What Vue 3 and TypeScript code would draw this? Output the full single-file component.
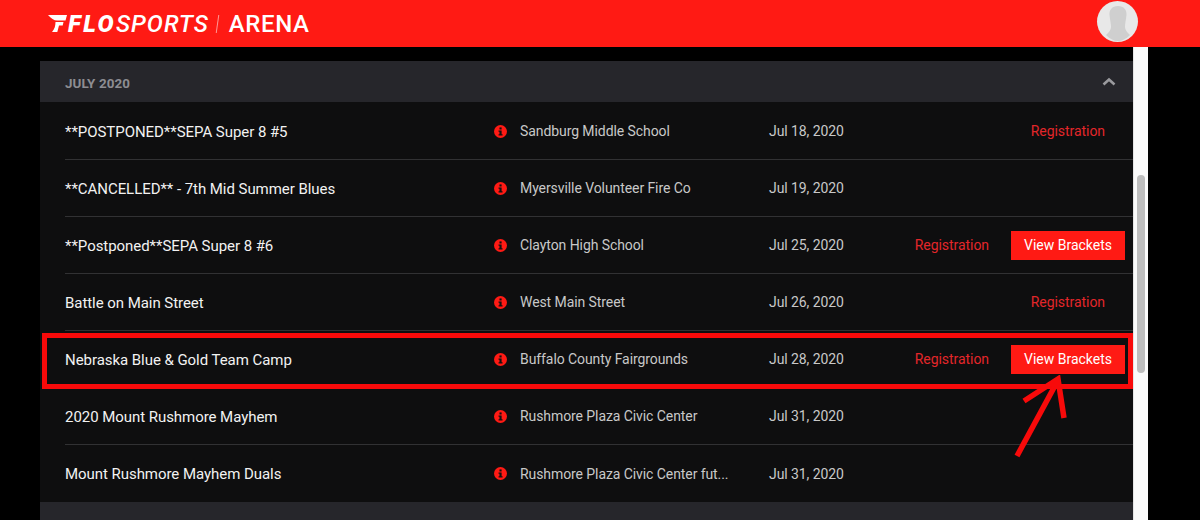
<template>
  <div class="page">
    <header class="topbar">
      <div class="brand">
        <svg class="brand-mark" viewBox="0 0 19 17" width="19" height="17" aria-hidden="true">
          <path d="M0 0 H19 L17.5 5.5 H9 C6 5.5 3 3.5 0 0 Z" fill="#fff" />
          <path d="M7.5 7 H15.5 L14.7 10.5 H11 L9.3 17 H4 C6.5 14 7.5 11 7.5 7 Z" fill="#fff" />
        </svg>
        <span class="brand-flo">FLO</span><span class="brand-sports">SPORTS</span>
        <span class="brand-slash"></span>
        <span class="brand-arena">ARENA</span>
      </div>
      <div class="avatar">
        <svg viewBox="0 0 40 40" width="40" height="40" aria-hidden="true">
          <path d="M20 4 C26 4 29 8 28.5 13 C28 18 27 21 27 25 C27 28 29 30 32 33 C28 37 24 39 20 39 C16 39 12 37 8 33 C11 30 13 28 13 25 C13 21 12 18 11.5 13 C11 8 14 4 20 4 Z" fill="#cfcfcf" />
        </svg>
      </div>
    </header>

    <div class="body">
      <main class="content">
        <section class="month">
          <span>JULY 2020</span>
          <svg class="chevron" viewBox="0 0 14 9" width="14" height="9" aria-hidden="true">
            <path d="M1.5 7.5 L7 2.5 L12.5 7.5" fill="none" stroke="#9a9a9e" stroke-width="2.6" />
          </svg>
        </section>

        <ul class="rows">
          <li v-for="event in events" :key="event.name" class="row">
            <div class="name">{{ event.name }}</div>
            <svg class="info" viewBox="0 0 14 14" width="13" height="13" aria-hidden="true">
              <circle cx="7" cy="7" r="7" fill="#ff1a14" />
              <rect x="5.9" y="2.6" width="2.3" height="2.2" fill="#111" />
              <path d="M4.9 5.9 H8.2 V9.9 H9.2 V11.4 H4.9 V9.9 H5.9 V7.4 H4.9 Z" fill="#111" />
            </svg>
            <div class="venue">{{ event.venue }}</div>
            <div class="date">{{ event.date }}</div>
            <div class="actions">
              <a v-if="event.registration" class="reg">Registration</a>
              <a v-if="event.brackets" class="brackets">View Brackets</a>
            </div>
          </li>
        </ul>

        <section class="month month--next"></section>

        <div class="highlight"></div>
        <svg class="arrow" viewBox="0 0 60 90" width="60" height="90" aria-hidden="true">
          <path d="M7 81 L47 7 M14 26 L48 4 L54 43" fill="none" stroke="#f80a0a" stroke-width="5.5" />
        </svg>
      </main>
      <div class="scrollbar"><div class="thumb"></div></div>
      <div class="gutter"></div>
    </div>
  </div>
</template>

<script setup lang="ts">
interface EventRow {
  name: string
  venue: string
  date: string
  registration: boolean
  brackets: boolean
}

const events: EventRow[] = [
  { name: '**POSTPONED**SEPA Super 8 #5', venue: 'Sandburg Middle School', date: 'Jul 18, 2020', registration: true, brackets: false },
  { name: '**CANCELLED** - 7th Mid Summer Blues', venue: 'Myersville Volunteer Fire Co', date: 'Jul 19, 2020', registration: false, brackets: false },
  { name: '**Postponed**SEPA Super 8 #6', venue: 'Clayton High School', date: 'Jul 25, 2020', registration: true, brackets: true },
  { name: 'Battle on Main Street', venue: 'West Main Street', date: 'Jul 26, 2020', registration: true, brackets: false },
  { name: 'Nebraska Blue & Gold Team Camp', venue: 'Buffalo County Fairgrounds', date: 'Jul 28, 2020', registration: true, brackets: true },
  { name: '2020 Mount Rushmore Mayhem', venue: 'Rushmore Plaza Civic Center', date: 'Jul 31, 2020', registration: false, brackets: false },
  { name: 'Mount Rushmore Mayhem Duals', venue: 'Rushmore Plaza Civic Center fut...', date: 'Jul 31, 2020', registration: false, brackets: false },
]
</script>

<style>
html,
body {
  margin: 0;
  background: #000;
  overflow: hidden;
}
</style>

<style scoped>
.page {
  width: 1200px;
  height: 520px;
  overflow: hidden;
  background: #000;
  font-family: 'Roboto', 'Liberation Sans', sans-serif;
  display: flex;
  flex-direction: column;
}

.topbar {
  height: 47px;
  flex: none;
  background: #ff1a14;
  display: flex;
  align-items: center;
  justify-content: space-between;
  padding: 0 62px 0 48px;
}

.brand {
  display: flex;
  align-items: center;
  color: #fff;
  font-size: 24px;
  line-height: 47px;
}

.brand-mark {
  margin-right: 1px;
}

.brand-flo {
  font-weight: 900;
  font-style: italic;
  letter-spacing: 2.4px;
  padding-top: 1px;
}

.brand-sports {
  font-weight: 500;
  font-style: italic;
  letter-spacing: 1px;
  padding-top: 1px;
}

.brand-slash {
  width: 1px;
  height: 18px;
  margin: 0 11px 0 8px;
  background: rgba(255, 255, 255, 0.55);
  transform: skewX(-8deg);
}

.brand-arena {
  font-weight: 500;
  letter-spacing: 0.6px;
  padding-top: 1px;
}

.avatar {
  width: 41px;
  height: 41px;
  margin-top: -4px;
  border-radius: 50%;
  background: #e8e8e8;
  overflow: hidden;
  display: flex;
  align-items: center;
  justify-content: center;
}

.body {
  flex: 1;
  display: flex;
  min-height: 0;
  padding-left: 40px;
}

.content {
  position: relative;
  width: 1093px;
  padding-top: 14px;
  background: #000;
}

.month {
  height: 41px;
  box-sizing: border-box;
  background: #26262b;
  padding: 4px 17px 0 25px;
  display: flex;
  align-items: center;
  justify-content: space-between;
  color: #8d8d92;
  font-size: 13.4px;
  font-weight: 700;
  letter-spacing: 0.1px;
}

.chevron {
  margin-top: -4px;
}

.month--next {
  height: 30px;
}

.rows {
  list-style: none;
  margin: 0;
  padding: 1px 0 0 25px;
  background: #0e0e0f;
}

.row {
  height: 57px;
  box-sizing: border-box;
  display: flex;
  align-items: center;
  border-bottom: 1px solid #313133;
}

.row:last-child {
  border-bottom: 0;
}

.name {
  width: 429px;
  flex: none;
  padding-top: 1px;
  box-sizing: border-box;
  color: #f2f2f2;
  font-size: 15px;
  letter-spacing: -0.05px;
}

.info {
  flex: none;
  margin-right: 13px;
}

.venue {
  width: 249px;
  flex: none;
  color: #c8c8c8;
  font-size: 14px;
  letter-spacing: -0.08px;
  white-space: nowrap;
}

.date {
  width: 120px;
  flex: none;
  color: #c8c8c8;
  font-size: 14px;
  letter-spacing: -0.08px;
}

.actions {
  flex: 1;
  display: flex;
  align-items: center;
  justify-content: flex-end;
  padding-right: 8px;
  font-size: 14px;
}

.reg {
  color: #e3262a;
  margin-right: 22px;
  letter-spacing: -0.05px;
}

.row:nth-child(1) .reg,
.row:nth-child(4) .reg {
  margin-right: 20px;
}

.brackets {
  width: 114px;
  height: 29px;
  background: #ff1a14;
  color: #fff;
  display: flex;
  align-items: center;
  justify-content: center;
}

.highlight {
  position: absolute;
  left: 2px;
  top: 286px;
  width: 1091px;
  height: 56px;
  box-sizing: border-box;
  border: 5px solid #f80a0a;
}

.arrow {
  position: absolute;
  left: 970px;
  top: 328px;
}

.scrollbar {
  width: 15px;
  flex: none;
  background: #fafafa;
  border-left: 1px solid #e4e4e4;
  box-sizing: border-box;
  padding: 128px 3px 0 3px;
}

.thumb {
  height: 198px;
  border-radius: 4px;
  background: #bdbdbd;
}

.gutter {
  flex: 1;
  background: #000;
}
</style>
